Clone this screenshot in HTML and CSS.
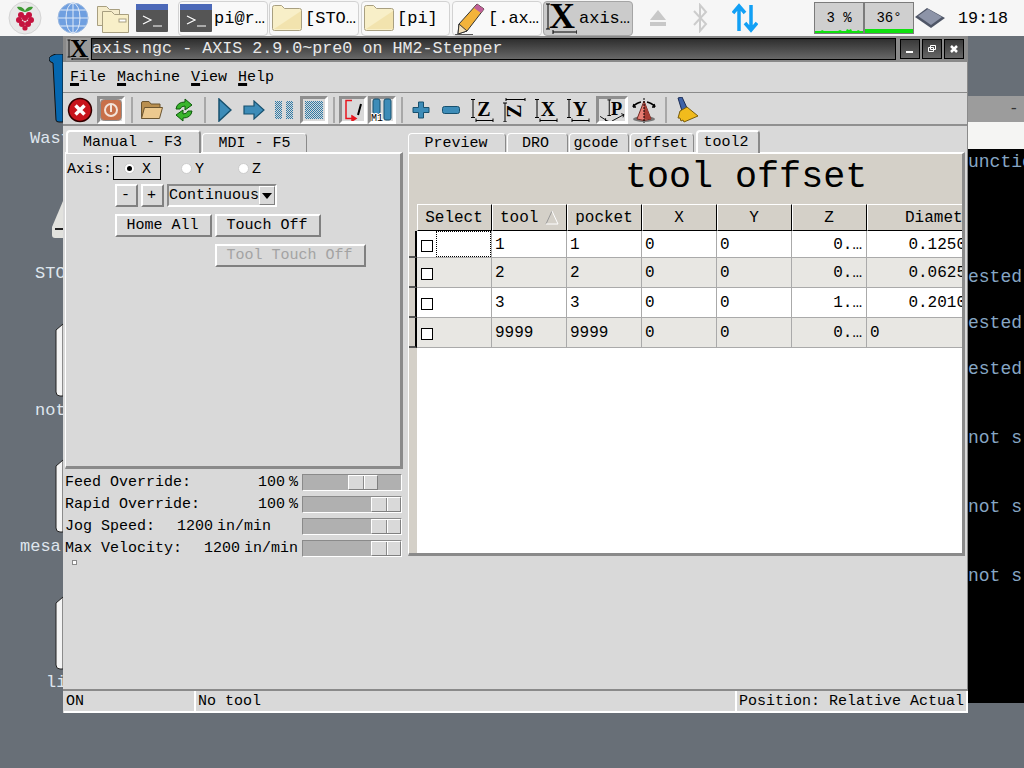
FILE: index.html
```html
<!DOCTYPE html>
<html lang="en">
<head>
<meta charset="utf-8">
<title>AXIS</title>
<link rel="stylesheet" href="styles.css">
</head>
<body>
<div class="screen">
  <header class="panel">
    <div class="launch l-rasp"><svg width="34" height="34" viewBox="0 0 34 34"><circle cx="17" cy="17" r="16" fill="#e8e8e8" stroke="#d4d4d4"/><path d="M17 11C13 10 10 9 9 6c4-1 7 1 8 4 1-3 4-5 8-4-1 3-4 4-8 5z" fill="#3f9a35"/><g fill="#c5133f"><circle cx="13" cy="14" r="3"/><circle cx="21" cy="14" r="3"/><circle cx="17" cy="17" r="3"/><circle cx="11" cy="19" r="3"/><circle cx="23" cy="19" r="3"/><circle cx="14" cy="23" r="3"/><circle cx="20" cy="23" r="3"/><circle cx="17" cy="27" r="2.6"/></g></svg></div>
    <div class="launch l-globe"><svg width="32" height="32" viewBox="0 0 32 32"><circle cx="16" cy="16" r="15" fill="#6f9fe0" stroke="#9cb9e0"/><g fill="none" stroke="#dfe9f7"><ellipse cx="16" cy="16" rx="7" ry="15"/><path d="M16 1v30M1 16h30M3.500 8h25M3.500 24h25"/></g></svg></div>
    <div class="launch l-files"><svg width="34" height="32" viewBox="0 0 34 32"><path d="M1.500 4.500h9l3 3h10v16h-22z" fill="#f5eccb" stroke="#a89f80"/><path d="M6.500 9.500h9l3 3h14v18h-26z" fill="#f8efc8" stroke="#a89f80"/><rect x="23" y="17" width="7" height="3" fill="#fff" stroke="#a89f80"/></svg></div>
    <div class="launch l-term"><svg width="32" height="28" viewBox="0 0 32 28"><rect width="32" height="28" rx="1" fill="#555"/><rect width="32" height="6" fill="#4c69b8"/><path d="M7 12l8 4-8 4M17 22h9" fill="none" stroke="#fff" stroke-width="1.200"/></svg></div>
    <div class="task t1"><svg class="task-ic" width="32" height="28" viewBox="0 0 32 28"><rect width="32" height="28" rx="1" fill="#555"/><rect width="32" height="6" fill="#4c69b8"/><path d="M7 12l8 4-8 4M17 22h9" fill="none" stroke="#fff" stroke-width="1.200"/></svg><span>pi@r…</span></div>
    <div class="task t2"><svg class="task-ic" width="32" height="28" viewBox="0 0 32 28"><path d="M1.500 3.500q0-2 2-2h7l3 3h15q2 0 2 2v18q0 2-2 2h-25q-2 0-2-2z" fill="#f8efc8" stroke="#a89f80"/><path d="M3 25L30 7v18z" fill="#f2e3ae"/></svg><span>[STO…</span></div>
    <div class="task t3"><svg class="task-ic" width="32" height="28" viewBox="0 0 32 28"><path d="M1.500 3.500q0-2 2-2h7l3 3h15q2 0 2 2v18q0 2-2 2h-25q-2 0-2-2z" fill="#f8efc8" stroke="#a89f80"/><path d="M3 25L30 7v18z" fill="#f2e3ae"/></svg><span>[pi]</span></div>
    <div class="task t4"><svg class="task-ic" width="32" height="34" viewBox="0 0 32 34"><path d="M23 3l7 5-17 22-9 3 1-10z" fill="#f3b33a" stroke="#333"/><path d="M23 3l7 5-3 4-7-5z" fill="#c0609a"/><path d="M5 23l8 7-9 3z" fill="#f3dfb6" stroke="#333"/><path d="M1 33.500h18" stroke="#555"/></svg><span>[.ax…</span></div>
    <div class="task t5 active"><svg class="task-ic" width="32" height="34" viewBox="0 0 32 34"><path d="M3 3v25M1 3h4M1 28h4M8 31h24M8 29v4M32 29v4" stroke="#000" fill="none"/><text x="17" y="27" class="ic-x-big">X</text></svg><span>axis…</span></div>
    <div class="tray">
      <svg class="tr-eject" width="18" height="18" viewBox="0 0 18 18"><path d="M9 1l8 10H1zM1 13h16v4H1z" fill="#c8c8c8"/></svg>
      <svg class="tr-bt" width="16" height="30" viewBox="0 0 16 30"><path d="M2 8l12 13-6 7V2l6 7L2 22" fill="none" stroke="#ccc" stroke-width="2"/></svg>
      <svg class="tr-net" width="26" height="30" viewBox="0 0 26 30"><path d="M7 28V4M1 10l6-7 6 7M19 2v24M13 20l6 7 6-7" fill="none" stroke="#12a0f5" stroke-width="3.500"/></svg>
    </div>
    <div class="meter"><span class="meter-t">3 %</span><svg class="meter-g" width="48" height="5" viewBox="0 0 48 5" preserveAspectRatio="none"><path d="M0 5V3h6l1-1 2 1h14l2-1 2 1h4l1-2 2 1 2-1 1 2h5l1-1 2 1h3v2z" fill="#10e010"/></svg></div>
    <div class="meter"><span class="meter-t">36°</span><svg class="meter-g" width="48" height="5" viewBox="0 0 48 5" preserveAspectRatio="none"><path d="M0 5V1h48v4z" fill="#10e010"/></svg></div>
    <svg class="chip" width="30" height="22" viewBox="0 0 30 22"><path d="M0 10L12 1l18 10-14 10z" fill="#4e5566"/><path d="M3 9l10-7 14 8-11 8z" fill="#8d94a8"/></svg>
    <div class="clock">19:18</div>
  </header>

  <div class="desk-icon d-trash"><svg width="14" height="70" viewBox="0 0 14 70"><path d="M14 5V0H7Q0 2 0 5q0 3 4 4l3 57q0 2 3 2h4z" fill="#0567b0" stroke="#111" stroke-width="1"/></svg></div>
  <div class="desk-label la-trash">Wast</div>
  <div class="desk-icon d-drive"><svg width="13" height="38" viewBox="0 0 13 38"><path d="M13 0L2 26v8q0 3 3 3h8z" fill="#e2e2de"/><rect x="5" y="27" width="8" height="2" fill="#222"/></svg></div>
  <div class="desk-label la-drive">STO</div>
  <div class="desk-icon d-note"><svg width="8" height="74" viewBox="0 0 8 74"><path d="M8 1L1 7v62q0 4 4 4h3z" fill="#f4f4f4" stroke="#222"/></svg></div>
  <div class="desk-label la-note">not</div>
  <div class="desk-icon d-mesa"><svg width="8" height="74" viewBox="0 0 8 74"><path d="M8 1L1 7v62q0 4 4 4h3z" fill="#f4f4f4" stroke="#222"/></svg></div>
  <div class="desk-label la-mesa">mesa</div>
  <div class="desk-icon d-li"><svg width="8" height="74" viewBox="0 0 8 74"><path d="M8 1L1 7v62q0 4 4 4h3z" fill="#f4f4f4" stroke="#222"/></svg></div>
  <div class="desk-label la-li">li</div>

  <section class="back-win">
    <div class="back-title"><span>-</span></div>
    <div class="back-band"></div>
    <div class="term">
      <div>unctions</div><div></div><div></div><div></div><div></div>
      <div>ested</div><div></div>
      <div>ested</div><div></div>
      <div>ested</div><div></div><div></div>
      <div>not s</div><div></div><div></div>
      <div>not s</div><div></div><div></div>
      <div>not s</div>
    </div>
  </section>

  <main class="win">
    <div class="titlebar">
      <svg class="tb-logo" width="24" height="23" viewBox="0 0 24 23"><rect width="24" height="23" fill="#999"/><path d="M3 2v17M1.500 2h3M1.500 19h3M6 21h16M6 20v2M22 20v2" stroke="#111" fill="none"/><text x="13" y="19" class="ic-x">X</text></svg>
      <div class="title-text">axis.ngc - AXIS 2.9.0~pre0 on HM2-Stepper</div>
      <div class="wbtn"><svg width="18" height="18" viewBox="0 0 18 18"><path d="M5 11h7v2H5z" fill="#fff"/></svg></div>
      <div class="wbtn"><svg width="18" height="18" viewBox="0 0 18 18"><path d="M7.500 5.500h5v4h-5zM5.500 7.500h5v4h-5z" fill="none" stroke="#fff"/></svg></div>
      <div class="wbtn"><svg width="18" height="18" viewBox="0 0 18 18"><path d="M6 6l6 6M12 6l-6 6" stroke="#fff" stroke-width="2.500"/></svg></div>
    </div>

    <nav class="menubar">
      <span><u>F</u>ile</span><span><u>M</u>achine</span><span><u>V</u>iew</span><span><u>H</u>elp</span>
    </nav>

    <div class="toolbar">
      <div class="tb w32"><svg width="26" height="26" viewBox="0 0 26 26"><circle cx="13" cy="13" r="11.500" fill="#c8141c" stroke="#300" stroke-width="1.500"/><path d="M8.500 8.500l9 9M17.500 8.500l-9 9" stroke="#fff" stroke-width="3.500"/></svg></div>
      <div class="tb w28 sunk mr"><svg width="22" height="22" viewBox="0 0 22 22"><rect x=".5" y=".5" width="21" height="21" rx="4" fill="#c8704a" stroke="#8e8e8e"/><circle cx="11" cy="11" r="6" fill="none" stroke="#f3e3da" stroke-width="2"/><path d="M11 5v8" stroke="#f3e3da" stroke-width="2"/></svg></div>
      <i class="sep s8"></i>
      <div class="tb w32"><svg width="24" height="20" viewBox="0 0 24 20"><path d="M1.500 18.500V3q0-1.500 1.500-1.500h6l2 2.500h9v4" fill="#b98f4f" stroke="#6b5530"/><path d="M1.500 18.500l3-11h18l-3 11z" fill="#ecc98f" stroke="#6b5530"/></svg></div>
      <div class="tb w32"><svg width="22" height="24" viewBox="0 0 22 24"><path d="M3 11Q4 4 12 4V1l7 6-7 5V8q-4 0-5 3z" fill="#39b52c" stroke="#0d5a0a"/><path d="M19 13q-1 7-9 7v3l-7-6 7-5v4q4 0 5-3z" fill="#39b52c" stroke="#0d5a0a"/></svg></div>
      <i class="sep s10"></i>
      <div class="tb w30"><svg width="14" height="24" viewBox="0 0 14 24"><path d="M1 1l12 11L1 23z" fill="#3d8cb8" stroke="#17506e" stroke-width="1.500"/></svg></div>
      <div class="tb w28"><svg width="22" height="20" viewBox="0 0 22 20"><path d="M1 6h10V1l10 9-10 9v-5H1z" fill="#3d8cb8" stroke="#17506e" stroke-width="1.200"/></svg></div>
      <div class="tb w32"><svg width="18" height="18" viewBox="0 0 18 18"><defs><pattern id="chk1" width="2" height="2" patternUnits="userSpaceOnUse"><rect class="px" width="2" height="2" fill="#d9d9d9"/><rect class="px" width="1" height="1" fill="#2e7ba8"/><rect class="px" x="1" y="1" width="1" height="1" fill="#2e7ba8"/></pattern></defs><rect class="px" width="7" height="18" fill="url(#chk1)"/><rect class="px" x="11" width="7" height="18" fill="url(#chk1)"/></svg></div>
      <div class="tb w28 sunk"><svg width="18" height="18" viewBox="0 0 18 18"><defs><pattern id="chk2" width="2" height="2" patternUnits="userSpaceOnUse"><rect class="px" width="2" height="2" fill="#d9d9d9"/><rect class="px" width="1" height="1" fill="#2e7ba8"/><rect class="px" x="1" y="1" width="1" height="1" fill="#2e7ba8"/></pattern></defs><rect class="px" width="18" height="18" fill="url(#chk2)"/></svg></div>
      <i class="sep s11"></i>
      <div class="tb w28 sunk"><svg width="22" height="22" viewBox="0 0 22 22"><path d="M10 1.500H4v18h9M10 17l4 2.500-4 2.500z" fill="none" stroke="#e8141c" stroke-width="1.500"/><path d="M16 16l3-11" stroke="#000" stroke-width="2"/></svg></div>
      <div class="tb w28 sunk mr2"><svg width="22" height="24" viewBox="0 0 22 24"><rect x="2" y="1" width="7" height="15" rx="2" fill="#3d8cb8" stroke="#17506e"/><rect x="13" y="1" width="7" height="21" rx="2" fill="#3d8cb8" stroke="#17506e"/><text x="0" y="23" class="ic-m1">M1</text></svg></div>
      <i class="sep s9"></i>
      <div class="tb w30"><svg width="18" height="18" viewBox="0 0 18 18"><path d="M6.500 1h5v5.500H17v5h-5.500V17h-5v-5.500H1v-5h5.500z" fill="#3d8cb8" stroke="#17506e"/></svg></div>
      <div class="tb w30"><svg width="18" height="8" viewBox="0 0 18 8"><rect x=".5" y=".5" width="17" height="7" rx="2" fill="#3d8cb8" stroke="#17506e"/></svg></div>
      <div class="tb w32"><svg width="24" height="24" viewBox="0 0 24 24"><path d="M3 1.500v18M1 1.500h4M1 19.500h4M6 22.500h17M6 20.500v4M23 20.500v4" stroke="#000" fill="none"/><text x="14" y="18" class="ic-l">Z</text></svg></div>
      <div class="tb w32"><svg width="24" height="24" viewBox="0 0 24 24"><path d="M3 5v19M1 5h4M1 24h4M4 1.500h19M4 0v3M23 0v3" stroke="#000" fill="none"/><text x="-13" y="19" transform="rotate(-90)" class="ic-l">Z</text></svg></div>
      <div class="tb w32"><svg width="24" height="24" viewBox="0 0 24 24"><path d="M3 1.500v18M1 1.500h4M1 19.500h4M6 22.500h17M6 20.500v4M23 20.500v4" stroke="#000" fill="none"/><text x="14" y="18" class="ic-l">X</text></svg></div>
      <div class="tb w32"><svg width="24" height="24" viewBox="0 0 24 24"><path d="M3 1.500v18M1 1.500h4M1 19.500h4M6 22.500h17M6 20.500v4M23 20.500v4" stroke="#000" fill="none"/><text x="14" y="18" class="ic-l">Y</text></svg></div>
      <div class="tb w32 sunk mx2"><svg width="26" height="22" viewBox="0 0 28 24"><path d="M11 1v17M9 1h4M9 18h4M1 19l8 5M7 21v3h3M14 24l13-7M24 16l3 1-1 3" stroke="#000" fill="none"/><text x="19" y="17" class="ic-l">P</text></svg></div>
      <div class="tb w32"><svg width="26" height="26" viewBox="0 0 26 26"><ellipse cx="13" cy="22" rx="11" ry="3" fill="#777"/><path d="M13 4l7 18q-7 3-14 0z" fill="#e87e74" stroke="#702a24"/><path d="M13 4v18.500l7-.500z" fill="#a83d34"/><path d="M13 1v25" stroke="#000" stroke-dasharray="2 1"/><path d="M2 10q3-4 8-5M24 10q-3-4-8-5M2 10l1-3M2 10l3 0M24 10l-1-3M24 10l-3 0" stroke="#000" fill="none" stroke-width="1.500"/></svg></div>
      <i class="sep s11"></i>
      <div class="tb w32"><svg width="24" height="26" viewBox="0 0 24 26"><path d="M3 1l4-1 5 11-5 3z" fill="#3f63a8" stroke="#1c2d55"/><path d="M5 14l7-4 11 9-14 6-1-2-2 1-1-3-2 0z" fill="#f1bb1c" stroke="#7a5d0c"/></svg></div>
    </div>

    <div class="body">
      <div class="left-col">
        <div class="tabs">
          <div class="tab sel w-man">Manual - F3</div>
          <div class="tab w-mdi">MDI - F5</div>
        </div>
        <div class="pane-l">
          <div class="row r-axis">
            <span class="axis-lbl">Axis:</span>
            <div class="radio on"><i class="dot checked"></i><span>X</span></div>
            <div class="radio"><i class="dot"></i><span>Y</span></div>
            <div class="radio"><i class="dot"></i><span>Z</span></div>
          </div>
          <div class="row r-jog">
            <div class="btn w-pm">-</div>
            <div class="btn w-pm">+</div>
            <div class="combo"><span>Continuous</span><div class="combo-arrow"><svg width="10" height="6" viewBox="0 0 10 6"><path d="M0 0h10L5 6z" fill="#000"/></svg></div></div>
          </div>
          <div class="row r-home">
            <div class="btn w-home">Home All</div>
            <div class="btn w-touch">Touch Off</div>
          </div>
          <div class="row r-tool">
            <div class="btn w-tool disabled">Tool Touch Off</div>
          </div>
        </div>
        <div class="ovr">
          <div class="ovr-t"><span>Feed Override:</span><span class="val">100</span><span>%</span></div>
          <div class="slider"><div class="thumb at-feed"></div></div>
        </div>
        <div class="ovr">
          <div class="ovr-t"><span>Rapid Override:</span><span class="val">100</span><span>%</span></div>
          <div class="slider"><div class="thumb"></div></div>
        </div>
        <div class="ovr">
          <div class="ovr-t pad-jog"><span>Jog Speed:</span><span class="val">1200</span><span>in/min</span></div>
          <div class="slider"><div class="thumb"></div></div>
        </div>
        <div class="ovr">
          <div class="ovr-t"><span>Max Velocity:</span><span class="val">1200</span><span>in/min</span></div>
          <div class="slider"><div class="thumb"></div></div>
        </div>
        <i class="grip"></i>
      </div>

      <div class="right-col">
        <div class="tabs">
          <div class="tab w-prev">Preview</div>
          <div class="tab w-dro">DRO</div>
          <div class="tab w-gc">gcode</div>
          <div class="tab w-off">offset</div>
          <div class="tab sel w-t2">tool2</div>
        </div>
        <div class="pane-r">
          <div class="offset-title">tool offset</div>
          <div class="table-wrap">
            <table class="tools">
              <colgroup><col class="c-g"><col class="c-n"><col class="c-n"><col class="c-n"><col class="c-n"><col class="c-n"><col class="c-n"><col class="c-d"></colgroup>
              <thead><tr>
                <th class="gut-h"></th><th>Select</th>
                <th class="th-l"><span>tool</span><svg class="sort" width="14" height="15" viewBox="0 0 14 15"><path d="M7 1L1 14" fill="none" stroke="#999"/><path d="M7 1l6 13H1" fill="none" stroke="#fff"/></svg></th>
                <th>pocket</th><th>X</th><th>Y</th><th>Z</th><th class="th-d">Diamet</th>
              </tr></thead>
              <tbody>
                <tr class="first">
                  <td class="gut"></td><td class="sel-cell"><i class="chk"></i><i class="focus"></i></td>
                  <td>1</td><td>1</td><td>0</td><td>0</td><td class="num">0.…</td><td class="num">0.1250</td>
                </tr>
                <tr class="alt">
                  <td class="gut"></td><td class="sel-cell"><i class="chk"></i></td>
                  <td>2</td><td>2</td><td>0</td><td>0</td><td class="num">0.…</td><td class="num">0.0625</td>
                </tr>
                <tr>
                  <td class="gut"></td><td class="sel-cell"><i class="chk"></i></td>
                  <td>3</td><td>3</td><td>0</td><td>0</td><td class="num">1.…</td><td class="num">0.2010</td>
                </tr>
                <tr class="alt">
                  <td class="gut"></td><td class="sel-cell"><i class="chk"></i></td>
                  <td>9999</td><td>9999</td><td>0</td><td>0</td><td class="num">0.…</td><td>0</td>
                </tr>
              </tbody>
            </table>
          </div>
        </div>
      </div>
    </div>

    <footer class="status">
      <div class="st st-a">ON</div>
      <div class="st st-b">No tool</div>
      <div class="st st-c">Position: Relative Actual</div>
    </footer>
  </main>
</div>
</body>
</html>
```
FILE: styles.css
```css
* { box-sizing: border-box; }
html, body { margin: 0; padding: 0; }
body { font-family: "Liberation Mono", monospace; font-size: 15px; color: #000; }
.screen { position: relative; width: 1024px; height: 768px; overflow: hidden; background: #686f77; }
svg { display: block; flex: none; }
.px { shape-rendering: crispEdges; }

/* panel */
.panel { display: flex; align-items: center; height: 36px; background: #f6f6f6; }
.launch { display: flex; justify-content: center; flex: none; }
.l-rasp { width: 34px; margin-left: 8px; }
.l-globe { width: 32px; margin-left: 15px; }
.l-files { width: 34px; margin-left: 7px; }
.l-term { width: 32px; margin-left: 6px; }
.task { display: flex; align-items: center; gap: 2px; height: 35px; flex: none; padding-left: 1px; border: 1px solid #d2d2d2; border-radius: 4px; background: #f9f9f9; font-size: 17px; overflow: hidden; }
.t1 { width: 90px; margin-left: 10px; }
.t2 { width: 90px; margin-left: 1px; }
.t3 { width: 89px; margin-left: 2px; }
.t4 { width: 90px; margin-left: 2px; }
.t5 { width: 90px; margin-left: 1px; }
.task.active { background: #cbcbcb; border-color: #a5a5a5; }
.tray { display: flex; align-items: center; flex: none; }
.tr-eject { margin-left: 16px; }
.tr-bt { margin-left: 25px; }
.tr-net { margin-left: 24px; }
.meter { position: relative; width: 50px; height: 32px; flex: none; border: 1px solid #7b7b7b; background: #cfcfcf; display: flex; align-items: center; justify-content: center; }
.tray + .meter { margin-left: 56px; }
.meter-t { font-size: 14px; }
.meter-g { position: absolute; left: 0; bottom: 0; }
.chip { margin-left: 1px; }
.clock { margin-left: 13px; font-size: 16.7px; }

/* desktop */
.desk-icon { position: absolute; }
.d-trash { left: 49px; top: 54px; }
.d-drive { left: 50px; top: 201px; }
.d-note { left: 55px; top: 323px; }
.d-mesa { left: 55px; top: 459px; }
.d-li { left: 55px; top: 596px; }
.desk-label { position: absolute; font-size: 17px; color: #dfe6ee; }
.la-trash { left: 30px; top: 129px; }
.la-drive { left: 35px; top: 264px; }
.la-note { left: 35px; top: 401px; }
.la-mesa { left: 20px; top: 537px; }
.la-li { left: 46px; top: 673px; }

/* window behind */
.back-win { position: absolute; left: 968px; top: 96px; width: 56px; height: 607px; display: flex; flex-direction: column; }
.back-title { height: 26px; flex: none; background: #9c9c9c; color: #333; font-size: 16px; line-height: 26px; padding-left: 41px; }
.back-band { height: 27px; flex: none; background: #f5f5f3; }
.term { flex: 1; padding-top: 2px; background: #000; color: #86a6c4; font-size: 18px; line-height: 23px; white-space: nowrap; overflow: hidden; }
.term div { height: 23px; }

/* main window */
.win { position: absolute; left: 63px; top: 36px; width: 905px; height: 677px; display: flex; flex-direction: column; background: #d9d9d9; border-right: 1px solid #8a8a8a; }
.titlebar { display: flex; align-items: center; height: 26px; flex: none; background: #8a8a8a; padding: 2px 3px; }
.title-text { flex: 1; height: 22px; margin: 0 2px 0 1px; background: linear-gradient(#2e2e2e, #686868); border: 1px solid #000; color: #e8e8e8; font-size: 16.7px; line-height: 19px; white-space: nowrap; }
.wbtn { width: 20px; height: 20px; flex: none; margin-left: 2px; border: 1px solid #000; background: linear-gradient(#3a3a3a, #666); }
.ic-x { font: bold 25px "Liberation Serif", serif; text-anchor: middle; }
.ic-x-big { font: bold 36px "Liberation Serif", serif; text-anchor: middle; }
.ic-l { font: bold 20px "Liberation Serif", serif; text-anchor: middle; }
.ic-m1 { font: 10px "Liberation Mono", monospace; stroke: #fff; stroke-width: 2; paint-order: stroke; }

.menubar { display: flex; height: 31px; flex: none; align-items: center; padding: 1px 0 0 7px; gap: 11px; border-bottom: 1px solid #8a8a8a; }
.menubar u { text-decoration-thickness: 3px; text-underline-offset: 2px; }

.toolbar { display: flex; align-items: center; height: 33px; flex: none; padding: 2px 0 0 1px; border-bottom: 2px solid #909090; }
.tb { display: flex; align-items: center; justify-content: center; height: 28px; flex: none; }
.w28 { width: 28px; }
.w30 { width: 30px; }
.w32 { width: 32px; }
.sunk { border: 3px solid; border-color: #8f8f8f #fff #fff #8f8f8f; }
.mr { margin: 0 3px 0 1px; }
.mr2 { margin-left: 1px; margin-right: 1px; }
.mx2 { margin: 0 0 0 2px; }
.sep { display: flex; justify-content: center; height: 26px; flex: none; }
.sep::before { content: ""; width: 2px; background: #a8a8a8; }
.s8 { width: 8px; }
.s9 { width: 9px; }
.s10 { width: 10px; }
.s11 { width: 11px; }

.body { display: flex; flex: 1; min-height: 0; padding: 4px 0 0 2px; gap: 5px; }
.left-col { width: 338px; flex: none; position: relative; }
.right-col { width: 557px; flex: none; }
.tabs { display: flex; align-items: flex-end; height: 22px; gap: 1px; position: relative; z-index: 1; padding-left: 1px; }
.right-col .tabs { padding-left: 0; }
.tab { height: 19px; line-height: 19px; text-align: center; background: #d9d9d9; border-top: 1px solid #fff; border-left: 1px solid #fff; border-right: 1px solid #8a8a8a; border-radius: 4px 4px 0 0; flex: none; }
.tab.sel { height: 23px; margin-bottom: -1px; line-height: 22px; border-top-width: 2px; border-left-width: 2px; border-right-width: 2px; }
.w-man { width: 135px; padding-right: 2px; }
.w-mdi { width: 105px; }
.w-prev { width: 98px; padding-right: 2px; }
.w-dro { width: 61px; padding-right: 4px; }
.w-gc { width: 60px; padding-right: 6px; }
.w-off { width: 64px; margin-right: 1px; padding-right: 2px; }
.w-t2 { width: 64px; padding-right: 4px; }

.pane-l { height: 317px; padding: 2px 0 0 1px; border: solid; border-color: #fff #8a8a8a #8a8a8a #fff; border-width: 2px 3px 3px 1px; }
.row { display: flex; height: 23px; }
.r-axis { height: 24px; align-items: center; }
.r-axis span { padding-top: 2px; }
.r-jog { margin: 4px 0 0 48px; gap: 3px; }
.r-home { margin: 7px 0 0 48px; gap: 3px; }
.r-tool { margin: 7px 0 0 148px; }
.axis-lbl { width: 46px; flex: none; }
.radio { display: flex; align-items: center; gap: 3px; width: 48px; height: 24px; margin-right: 9px; padding-left: 10px; border: 1px solid transparent; flex: none; }
.radio.on { gap: 7px; border-color: #000; }
.dot { display: flex; align-items: center; justify-content: center; width: 11px; height: 11px; margin-top: 1px; border-radius: 50%; background: #fff; border: 1px solid #ccc; flex: none; }
.dot.checked::before { content: ""; width: 5px; height: 5px; border-radius: 50%; background: #000; }
.btn { display: flex; align-items: center; justify-content: center; height: 23px; flex: none; padding-right: 2px; border: 2px solid; border-color: #fff #808080 #808080 #fff; }
.btn.disabled { color: #a3a3a3; }
.w-pm { width: 23px; }
.w-home { width: 97px; }
.w-touch { width: 106px; }
.w-tool { width: 151px; }
.combo { display: flex; align-items: center; justify-content: space-between; width: 110px; height: 23px; padding: 0 0 0 0; border: 2px solid; border-color: #8a8a8a #fff #fff #8a8a8a; flex: none; }
.combo-arrow { display: flex; align-items: center; justify-content: center; width: 16px; height: 19px; border: 1px solid; border-color: #fff #808080 #808080 #fff; }

.ovr { display: flex; align-items: center; height: 22px; }
.ovr:nth-child(3) { margin-top: 2px; }
.ovr-t { display: flex; gap: 4px; width: 233px; margin-right: 4px; flex: none; }
.ovr-t .val { margin-left: auto; }
.pad-jog { padding-right: 27px; }
.slider { position: relative; display: flex; justify-content: flex-end; width: 100px; height: 17px; background: #b0b0b0; border: 1px solid; border-color: #8a8a8a #fff #fff #8a8a8a; }
.thumb { position: relative; width: 30px; height: 15px; background: linear-gradient(90deg, #d9d9d9 0 14px, #8a8a8a 14px 15px, #fff 15px 16px, #d9d9d9 16px); border: 1px solid; border-color: #fff #808080 #808080 #fff; }
.thumb.at-feed { margin-right: 23px; }
.grip { display: block; width: 5px; height: 5px; margin: 1px 0 0 7px; border: 1px solid #8a8a8a; background: #fff; }

.pane-r { height: 404px; display: flex; flex-direction: column; background: #d4d0c8; border: solid; border-color: #fff #8a8a8a #8a8a8a #fff; border-width: 2px 3px 3px 1px; }
.offset-title { height: 50px; flex: none; padding-left: 216px; font-size: 36.7px; line-height: 46px; white-space: nowrap; }
.table-wrap { flex: 1; min-height: 0; overflow: hidden; background: linear-gradient(90deg, #d4d0c8 8px, #fff 8px); }
.tools { width: 562px; table-layout: fixed; border-collapse: separate; border-spacing: 0; font-size: 16px; }
.c-g { width: 8px; }
.c-n { width: 75px; }
.c-d { width: 104px; }
.tools th { height: 27px; padding: 1px 1px 0 0; font-weight: normal; background: #d4d0c8; text-align: center; border-top: 1px solid #fff; border-left: 1px solid #fff; border-right: 1px solid #000; border-bottom: 1px solid #000; white-space: nowrap; }
.tools th.gut-h { border: 0; }
.tools th.th-l { text-align: left; padding-left: 7px; }
.th-l span { vertical-align: middle; }
.sort { display: inline-block; vertical-align: middle; margin-left: 7px; }
.tools th.th-d { text-align: left; padding-left: 37px; }
.tools td { height: 30px; padding: 0 3px; background: #fff; border-right: 1px solid #aaa; border-bottom: 1px solid #aaa; white-space: nowrap; overflow: hidden; }
.tools tr.first td { height: 27px; padding-top: 1px; }
.tools tr.alt td { background: #e8e7e3; }
.tools td.gut, .tools tr.alt td.gut { padding: 0; background: #d4d0c8; border-right: 2px solid #000; border-bottom: 2px solid #555; }
.tools td.num { text-align: right; padding-right: 4px; }
.tools td.sel-cell { position: relative; padding: 2px 0 0 4px; }
.tools tr.first td.sel-cell { padding-top: 3px; }
.chk { display: block; width: 12px; height: 12px; border: 1px solid #000; background: #fff; }
.focus { position: absolute; left: 19px; top: 0; right: 0; bottom: 0; border: 1px dotted #000; }

.status { display: flex; height: 24px; flex: none; padding-left: 1px; border-top: 2px solid #8a8a8a; background: #d9d9d9; }
.st { padding-left: 2px; border-right: 2px solid #fff; border-bottom: 2px solid #fff; line-height: 21px; white-space: nowrap; flex: none; }
.st-a { width: 132px; }
.st-b { width: 541px; }
.st-c { width: 231px; }
```
